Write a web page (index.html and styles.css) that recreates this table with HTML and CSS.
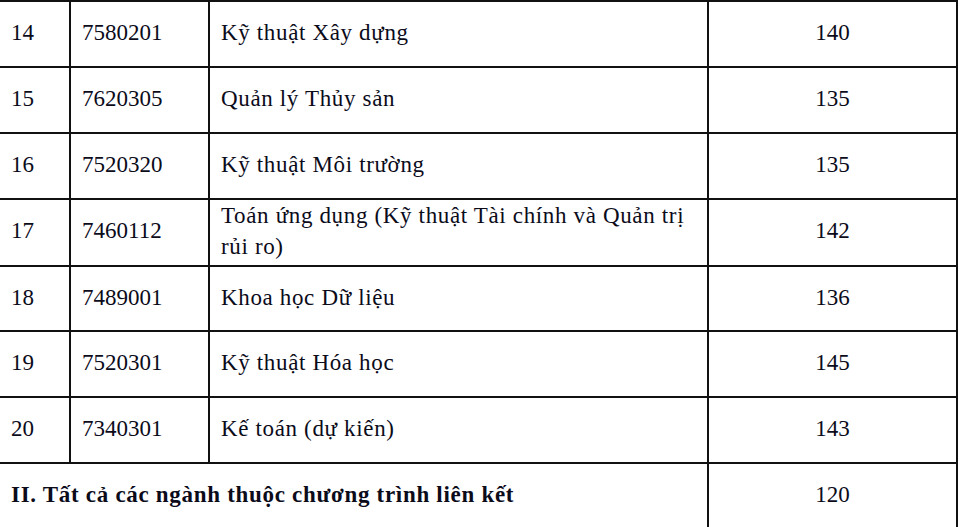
FILE: index.html
```html
<!DOCTYPE html>
<html lang="vi">
<head>
<meta charset="utf-8">
<link rel="stylesheet" href="styles.css">
</head>
<body>
<table class="quota">
  <colgroup>
    <col class="c-stt">
    <col class="c-code">
    <col class="c-name">
    <col class="c-num">
  </colgroup>
  <tbody>
    <tr><td class="stt">14</td><td class="code">7580201</td><td class="name">Kỹ thuật Xây dựng</td><td class="num">140</td></tr>
    <tr><td class="stt">15</td><td class="code">7620305</td><td class="name">Quản lý Thủy sản</td><td class="num">135</td></tr>
    <tr><td class="stt">16</td><td class="code">7520320</td><td class="name">Kỹ thuật Môi trường</td><td class="num">135</td></tr>
    <tr><td class="stt">17</td><td class="code">7460112</td><td class="name">Toán ứng dụng (Kỹ thuật Tài chính và Quản trị rủi ro)</td><td class="num">142</td></tr>
    <tr><td class="stt">18</td><td class="code">7489001</td><td class="name">Khoa học Dữ liệu</td><td class="num">136</td></tr>
    <tr><td class="stt">19</td><td class="code">7520301</td><td class="name">Kỹ thuật Hóa học</td><td class="num">145</td></tr>
    <tr><td class="stt">20</td><td class="code">7340301</td><td class="name">Kế toán (dự kiến)</td><td class="num">143</td></tr>
    <tr class="section"><td class="stt section-title" colspan="3">II. Tất cả các ngành thuộc chương trình liên kết</td><td class="num">120</td></tr>
  </tbody>
</table>
</body>
</html>
```

FILE: styles.css
```css
html, body {
  margin: 0;
  padding: 0;
  background: #ffffff;
}

body {
  font-family: "Liberation Serif", "Times New Roman", serif;
  font-size: 23px;
  color: #0b0b1a;
  overflow: hidden;
}

.quota {
  border-collapse: collapse;
  table-layout: fixed;
  width: 957px;
}

.c-stt { width: 70px; }
.c-code { width: 139px; }
.c-name { width: 499px; }
.c-num { width: 249px; }

.quota td {
  border: 2px solid #111111;
  height: 65.86px;
  padding: 0 8px 3px 11px;
  line-height: 31px;
  vertical-align: middle;
  box-sizing: border-box;
}

.quota td:first-child {
  border-left: none;
}

.quota td.name {
  letter-spacing: 0.65px;
}

.quota td.num {
  text-align: center;
  padding-left: 0;
  padding-right: 0;
}

.quota td.section-title {
  font-weight: bold;
  letter-spacing: 0.7px;
}
```
